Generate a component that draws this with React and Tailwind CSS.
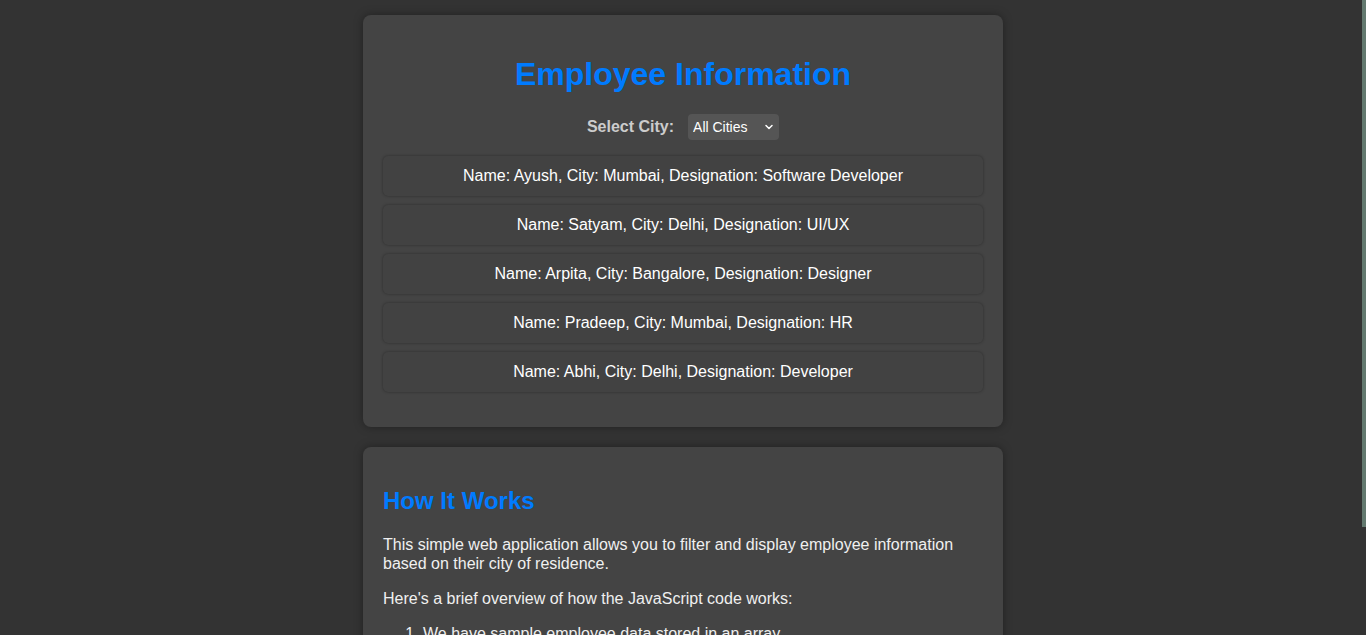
import React, { useState } from 'react';
import { FiChevronDown } from 'react-icons/fi';

const employees = [
  { name: 'Ayush', city: 'Mumbai', designation: 'Software Developer' },
  { name: 'Satyam', city: 'Delhi', designation: 'UI/UX' },
  { name: 'Arpita', city: 'Bangalore', designation: 'Designer' },
  { name: 'Pradeep', city: 'Mumbai', designation: 'HR' },
  { name: 'Abhi', city: 'Delhi', designation: 'Developer' }
];

const App = () => {
  const [city, setCity] = useState('all');

  const shown = employees.filter((e) => city === 'all' || e.city === city);

  return (
    <div className="min-h-screen bg-[#333333] pt-[15px] pb-[20px] font-['Liberation_Sans',Arial,sans-serif] text-[#f0f0f0]">
      {/* Filter card */}
      <div className="mx-auto w-[640px] rounded-[8px] bg-[#444444] p-[20px] shadow-[0_0_10px_rgba(0,0,0,0.35)]">
        <h1 className="my-[21px] text-center text-[32px] font-bold leading-[37px] text-[#007bff]">
          Employee Information
        </h1>

        <div className="flex items-center justify-center gap-[14px]">
          <label className="text-[16px] font-bold text-[#cccccc]">Select City:</label>
          <div className="relative">
            <select
              value={city}
              onChange={(e) => setCity(e.target.value)}
              className="block h-[26px] w-[91px] appearance-none rounded-[4px] bg-[#555555] pl-[5px] text-[14px] text-white outline-none"
            >
              <option value="all">All Cities</option>
              <option value="Mumbai">Mumbai</option>
              <option value="Delhi">Delhi</option>
              <option value="Bangalore">Bangalore</option>
            </select>
            <FiChevronDown className="pointer-events-none absolute right-[4px] top-[7px] h-[12px] w-[12px] stroke-[3] text-white" />
          </div>
        </div>

        <ul className="mt-[16px] mb-[15px] flex flex-col gap-[9px]">
          {shown.map((e) => (
            <li
              key={e.name}
              className="flex h-[40px] items-center justify-center rounded-[5px] bg-[#424242] text-[16px] text-white shadow-[0_0_3px_rgba(0,0,0,0.35)]"
            >
              Name: {e.name}, City: {e.city}, Designation: {e.designation}
            </li>
          ))}
        </ul>
      </div>

      {/* Explanation card */}
      <div className="mx-auto mt-[20px] w-[640px] rounded-[8px] bg-[#444444] p-[20px] shadow-[0_0_10px_rgba(0,0,0,0.35)]">
        <h2 className="my-[20px] text-[24px] font-bold leading-[28px] text-[#007bff]">How It Works</h2>
        <p className="mb-[16px] text-[16px] leading-[19px]">
          This simple web application allows you to filter and display employee information based on their city of residence.
        </p>
        <p className="mb-[16px] text-[16px] leading-[19px]">
          Here's a brief overview of how the JavaScript code works:
        </p>
        <ol className="list-decimal pl-[40px] text-[16px] leading-[19px]">
          <li>We have sample employee data stored in an array.</li>
          <li>When the page loads, all employees are displayed.</li>
          <li>Selecting a city from the dropdown filters the list.</li>
          <li>Only employees from the chosen city are shown.</li>
        </ol>
      </div>

      {/* Thin overlay scrollbar */}
      <div className="fixed right-0 top-0 h-[527px] w-[4px] bg-[#63796f]" />
    </div>
  );
};

export default App;
